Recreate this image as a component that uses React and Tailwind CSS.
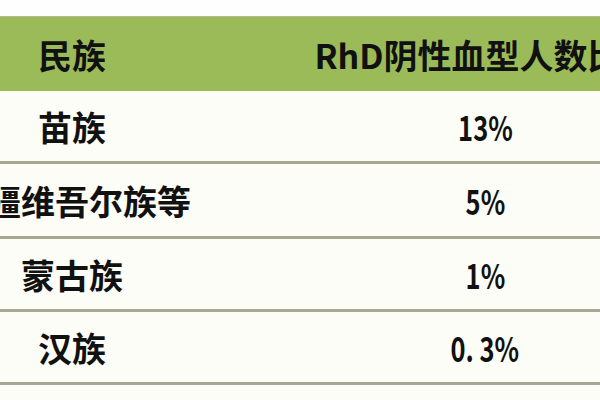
import React from 'react';

const rows = [
  { name: '苗族', value: '13%', h: 'h-[73px]' },
  { name: '新疆维吾尔族等', value: '5%', h: 'h-[75px]' },
  { name: '蒙古族', value: '1%', h: 'h-[73px]' },
  { name: '汉族', value: '0. 3%', h: 'h-[73px]' },
];

const font = { fontFamily: '"Noto Sans CJK SC", "Liberation Sans", sans-serif' };

export default function App() {
  return (
    <div className="w-[600px] h-[400px] overflow-hidden bg-[#fdfdf7]" style={font}>
      <div className="h-[16px] bg-[#fefefe]" />

      {/* header */}
      <div className="flex h-[75px] bg-[#9bbb59] border-t border-[#b4b89c] text-[34px] font-bold text-[#111]">
        <div className="w-[144px] shrink-0 flex items-center justify-center whitespace-nowrap">民族</div>
        <div className="w-[682px] shrink-0 flex items-center justify-center whitespace-nowrap">
          RhD阴性血型人数比例
        </div>
      </div>

      {/* body */}
      {rows.map((r) => (
        <div
          key={r.name}
          className={`flex ${r.h} border-b-[3px] border-[#a7a893] text-[34px] font-bold text-[#111]`}
        >
          <div className="w-[144px] shrink-0 flex items-center justify-center whitespace-nowrap">{r.name}</div>
          <div className="w-[682px] shrink-0 flex items-center justify-center whitespace-nowrap">
            <span className="inline-block scale-x-75">{r.value}</span>
          </div>
        </div>
      ))}
    </div>
  );
}
